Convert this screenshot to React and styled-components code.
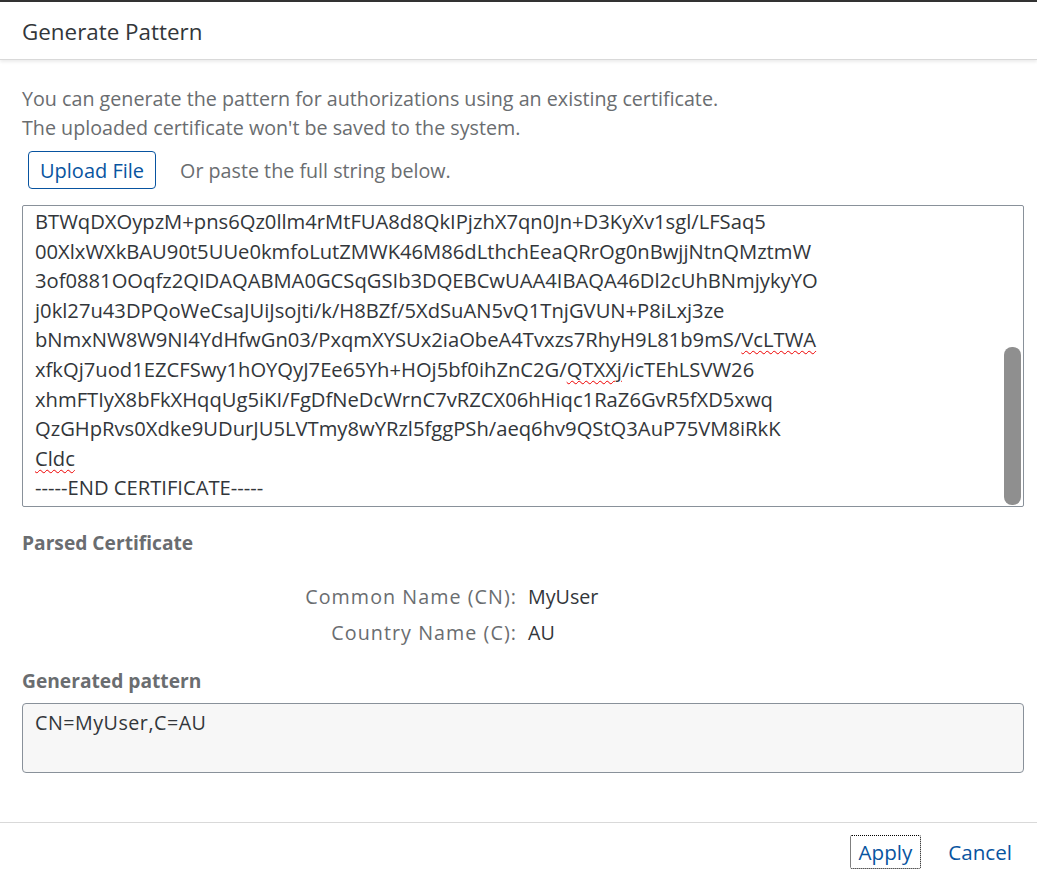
import React from "react";
import styled, { createGlobalStyle } from "styled-components";

const TEXT = "#32363a";
const GREY = "#6a6d70";
const BLUE = "#0854a0";
const FIELD_BORDER = "#89919a";

const GlobalStyle = createGlobalStyle`
  html, body {
    margin: 0;
    background: #fff;
  }
  body {
    font-family: "Open Sans", "Noto Sans", sans-serif;
    color: ${TEXT};
  }
`;

// the field is scrolled to its end, so only the tail of the certificate shows
const certLines = [
  ["BTWqDXOypzM+pns6Qz0llm4rMtFUA8d8QkIPjzhX7qn0Jn+D3KyXv1sgl/LFSaq5"],
  ["00XlxWXkBAU90t5UUe0kmfoLutZMWK46M86dLthchEeaQRrOg0nBwjjNtnQMztmW"],
  ["3of0881OOqfz2QIDAQABMA0GCSqGSIb3DQEBCwUAA4IBAQA46Dl2cUhBNmjykyYO"],
  ["j0kl27u43DPQoWeCsaJUiJsojti/k/H8BZf/5XdSuAN5vQ1TnjGVUN+P8iLxj3ze"],
  ["bNmxNW8W9NI4YdHfwGn03/PxqmXYSUx2iaObeA4Tvxzs7RhyH9L81b9mS/", { typo: "VcLTWA" }],
  ["xfkQj7uod1EZCFSwy1hOYQyJ7Ee65Yh+HOj5bf0ihZnC2G/", { typo: "QTXXj" }, "/icTEhLSVW26"],
  ["xhmFTIyX8bFkXHqqUg5iKI/FgDfNeDcWrnC7vRZCX06hHiqc1RaZ6GvR5fXD5xwq"],
  ["QzGHpRvs0Xdke9UDurJU5LVTmy8wYRzl5fggPSh/aeq6hv9QStQ3AuP75VM8iRkK"],
  [{ typo: "Cldc" }],
  ["-----END CERTIFICATE-----"]
];

const Dialog = styled.div`
  display: flex;
  flex-direction: column;
  height: 870px;
  box-sizing: border-box;
  border-top: 2px solid #333;
  background: #fff;
`;

const Header = styled.header`
  flex: none;
  height: 58px;
  display: flex;
  align-items: center;
  padding: 1px 22px 0;
  box-sizing: border-box;
  font-size: 22.4px;
  color: ${TEXT};
  border-bottom: 1px solid #d9d9d9;
  box-shadow: 0 2px 3px rgba(0, 0, 0, 0.08);
  position: relative;
  z-index: 1;
`;

const Content = styled.main`
  flex: 1;
  padding: 24px 13px 0 22px;
  display: flex;
  flex-direction: column;
`;

const Intro = styled.p`
  margin: 0;
  font-size: 19.7px;
  line-height: 29px;
  color: ${GREY};
`;

const UploadRow = styled.div`
  display: flex;
  align-items: center;
  gap: 24px;
  margin: 9px 0 16px 6px;
`;

const OutlineButton = styled.button`
  height: 38px;
  padding: 0 11px;
  font: inherit;
  font-size: 20px;
  color: ${BLUE};
  background: #fff;
  border: 1px solid ${BLUE};
  border-radius: 4px;
`;

const Hint = styled.span`
  font-size: 19.7px;
  color: ${GREY};
`;

const CertWrap = styled.div`
  position: relative;
  height: 300px;
  border: 1px solid ${FIELD_BORDER};
  border-radius: 2px;
`;

const CertText = styled.div`
  height: 100%;
  overflow: hidden;
  padding: 1px 0 0 12px;
  box-sizing: border-box;
  font-size: 20.2px;
  line-height: 29.6px;
  color: ${TEXT};
  white-space: pre;
`;

const CertLine = styled.div`
  height: 29.6px;
`;

const ScrollThumb = styled.div`
  position: absolute;
  right: 2px;
  bottom: 1px;
  width: 17px;
  height: 158px;
  border-radius: 8px;
  background: #8f8f8f;
`;

const Typo = styled.span`
  text-decoration: underline wavy #e00;
  text-decoration-thickness: 1px;
  text-underline-offset: 3px;
`;

const SectionTitle = styled.h3`
  margin: ${(p) => p.$top || 0}px 0 0;
  font-size: 19.2px;
  font-weight: 700;
  line-height: 29px;
  color: ${GREY};
`;

const Fields = styled.div`
  display: grid;
  grid-template-columns: 495px 1fr;
  column-gap: 11px;
  row-gap: 7px;
  margin-top: 25px;
`;

const FieldLabel = styled.span`
  text-align: right;
  font-size: 19.7px;
  letter-spacing: 1.05px;
  line-height: 29px;
  color: ${GREY};
`;

const FieldValue = styled.span`
  font-size: 19.7px;
  line-height: 29px;
  color: ${TEXT};
`;

const PatternBox = styled.div`
  margin-top: 8px;
  height: 70px;
  box-sizing: border-box;
  padding: 4px 12px;
  background: #f7f7f7;
  border: 1px solid ${FIELD_BORDER};
  border-radius: 4px;
  font-size: 19.7px;
  letter-spacing: 0.5px;
  line-height: 29px;
  color: ${TEXT};
`;

const Footer = styled.footer`
  flex: none;
  height: 48px;
  box-sizing: border-box;
  display: flex;
  align-items: flex-start;
  justify-content: flex-end;
  gap: 18px;
  padding: 12px 16px 0 0;
  border-top: 1px solid #d9d9d9;
`;

const TextButton = styled.button`
  height: 34px;
  padding: 0 8px;
  font: inherit;
  font-size: 20.6px;
  color: ${BLUE};
  background: transparent;
  border: 1px ${(p) => (p.$focused ? "dotted #000" : "solid transparent")};
  border-radius: 2px;
`;

export default function App() {
  return (
    <>
      <GlobalStyle />
      <Dialog>
        <Header>Generate Pattern</Header>
        <Content>
          <Intro>
            You can generate the pattern for authorizations using an existing certificate.
            <br />
            The uploaded certificate won't be saved to the system.
          </Intro>
          <UploadRow>
            <OutlineButton>Upload File</OutlineButton>
            <Hint>Or paste the full string below.</Hint>
          </UploadRow>
          <CertWrap>
            <CertText>
              {certLines.map((parts, i) => (
                <CertLine key={i}>
                  {parts.map((part, j) =>
                    typeof part === "string" ? part : <Typo key={j}>{part.typo}</Typo>
                  )}
                </CertLine>
              ))}
            </CertText>
            <ScrollThumb />
          </CertWrap>

          <SectionTitle $top={21}>Parsed Certificate</SectionTitle>
          <Fields>
            <FieldLabel>Common Name (CN):</FieldLabel>
            <FieldValue>MyUser</FieldValue>
            <FieldLabel>Country Name (C):</FieldLabel>
            <FieldValue>AU</FieldValue>
          </Fields>

          <SectionTitle $top={19}>Generated pattern</SectionTitle>
          <PatternBox>CN=MyUser,C=AU</PatternBox>
        </Content>
        <Footer>
          <TextButton $focused>Apply</TextButton>
          <TextButton>Cancel</TextButton>
        </Footer>
      </Dialog>
    </>
  );
}
